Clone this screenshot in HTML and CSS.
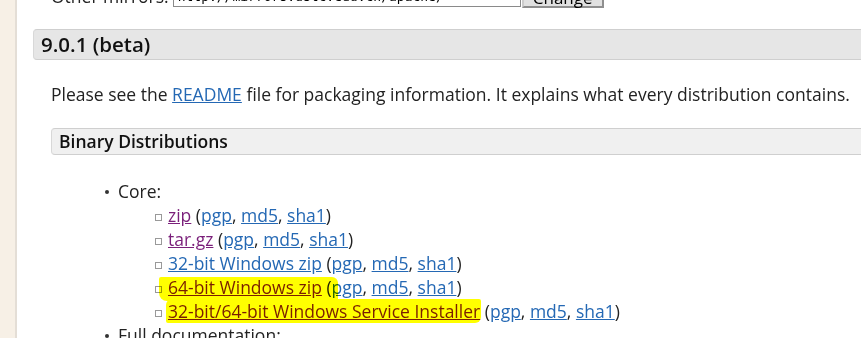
FILE: index.html
```html
<!DOCTYPE html>
<html lang="en">
<head>
    <meta charset="UTF-8">
    <title>Apache Tomcat 9 Downloads</title>
    <link rel="stylesheet" href="styles.css">
</head>
<body>
    <div class="page">
        <div class="sidebar"></div>
        <div class="content">
            <form class="mirror-form">
                <span>Other mirrors:</span>
                <input type="text" value="http://mirrors.ustc.edu.cn/apache/">
                <button type="button">Change</button>
            </form>

            <h3 class="version">9.0.1 (beta)</h3>
            <div class="section">
                <p>Please see the <a href="#">README</a> file for packaging information. It explains what every distribution contains.</p>

                <h4 class="subhead">Binary Distributions</h4>
                <ul class="dists">
                    <li>Core:
                        <ul>
                            <li><a class="visited" href="#">zip</a> (<a href="#">pgp</a>, <a href="#">md5</a>, <a href="#">sha1</a>)</li>
                            <li><a class="visited" href="#">tar.gz</a> (<a href="#">pgp</a>, <a href="#">md5</a>, <a href="#">sha1</a>)</li>
                            <li><a href="#">32-bit Windows zip</a> (<a href="#">pgp</a>, <a href="#">md5</a>, <a href="#">sha1</a>)</li>
                            <li class="marked">
                                <span class="marker marker-one"></span>
                                <a class="visited" href="#">64-bit Windows zip</a> (<a href="#">pgp</a>, <a href="#">md5</a>, <a href="#">sha1</a>)
                            </li>
                            <li class="marked">
                                <span class="marker marker-two"></span>
                                <a class="visited" href="#">32-bit/64-bit Windows Service Installer</a> (<a href="#">pgp</a>, <a href="#">md5</a>, <a href="#">sha1</a>)
                            </li>
                        </ul>
                    </li>
                    <li>Full documentation:</li>
                </ul>
            </div>
        </div>
    </div>
</body>
</html>
```

FILE: styles.css
```css
* {
    margin: 0;
    padding: 0;
    box-sizing: border-box;
}
body {
    background: #fff;
    color: #222;
    font-family: "Open Sans", "Liberation Sans", sans-serif;
    font-size: 17.5px;
    line-height: 24px;
    overflow: hidden;
}
a {
    color: #2468b4;
    text-decoration: underline;
}
a.visited {
    color: #7a1f7a;
}
.page {
    display: flex;
    min-height: 338px;
}
.sidebar {
    width: 17px;
    flex: none;
    background: #f7f0e6;
    border-right: 2px solid #e4ded6;
}
.content {
    flex: 1;
    padding-left: 16px;
    margin-top: -16px;
}
.mirror-form {
    display: flex;
    align-items: flex-end;
    gap: 4px;
    padding-left: 18px;
    height: 24px;
}
.mirror-form input {
    width: 348px;
    height: 22px;
    border: 1px solid #8a8a8a;
    font: 13px "DejaVu Sans Mono", monospace;
    padding: 0 4px;
    margin-bottom: 1px;
}
.mirror-form button {
    margin-left: -3px;
    width: 82px;
    height: 24px;
    background: #e1e1e1;
    border: 2px solid #8f8f8f;
    border-top-color: #ccc;
    border-left-color: #ccc;
    font: 17px "Open Sans", sans-serif;
}
.version {
    margin-top: 21px;
    height: 31px;
    background: #e6e6e6;
    border-top: 1px solid #cfcfcf;
    border-bottom: 1px solid #cfcfcf;
    border-left: 1px solid #d8d8d8;
    border-radius: 4px 0 0 4px;
    font-size: 20.5px;
    font-weight: 600;
    line-height: 29px;
    padding-left: 7px;
    color: #111;
}
.section {
    padding-left: 18px;
}
.section p {
    margin-top: 22px;
}
.subhead {
    margin-top: 22px;
    height: 27px;
    background: #f0f0f0;
    border-top: 1px solid #cfcfcf;
    border-bottom: 1px solid #cfcfcf;
    border-left: 1px solid #d8d8d8;
    border-radius: 4px 0 0 4px;
    font-size: 17.5px;
    font-weight: 600;
    line-height: 25px;
    padding-left: 7px;
    color: #111;
}
.dists {
    margin-top: 24px;
    padding-left: 67px;
}
.dists,
.dists ul {
    list-style: none;
}
.dists li {
    position: relative;
}
.dists > li::before {
    content: "";
    position: absolute;
    left: -13px;
    top: 11px;
    width: 4px;
    height: 4px;
    border-radius: 50%;
    background: #333;
}
.dists ul {
    padding-left: 50px;
}
.dists ul li::before {
    content: "";
    position: absolute;
    left: -13px;
    top: 11px;
    width: 5px;
    height: 5px;
    border: 1px solid #999;
}
.marker {
    position: absolute;
    background: #ffff00;
    mix-blend-mode: multiply;
    pointer-events: none;
}
.marker-one {
    left: -9px;
    top: 2px;
    width: 179px;
    height: 24px;
    border-radius: 2px 6px 2px 8px;
}
.marker-two {
    left: -2px;
    top: 0;
    width: 315px;
    height: 24px;
    border-radius: 6px 2px 6px 2px;
}
```
